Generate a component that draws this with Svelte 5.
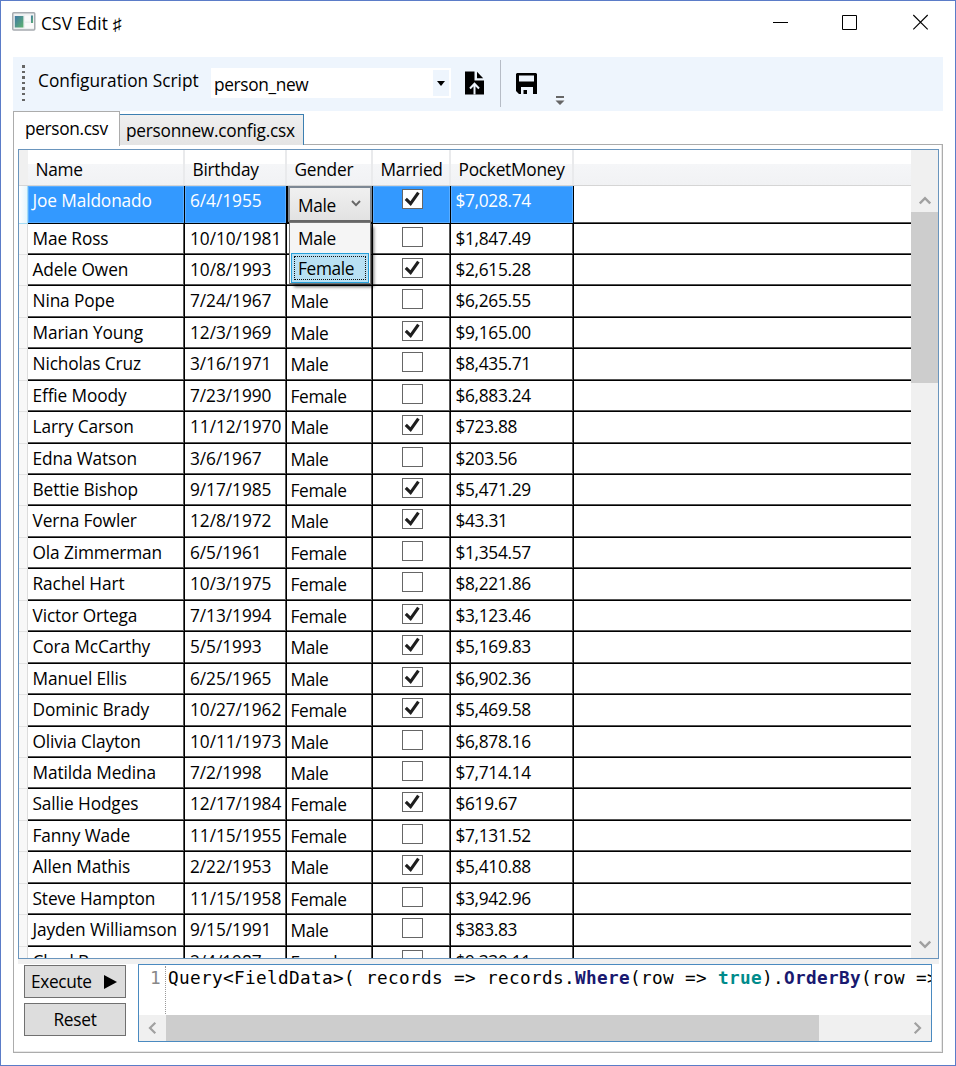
<script>
  const raw = `Joe Maldonado|6/4/1955|Male|1|$7,028.74
Mae Ross|10/10/1981|Male|0|$1,847.49
Adele Owen|10/8/1993|Female|1|$2,615.28
Nina Pope|7/24/1967|Male|0|$6,265.55
Marian Young|12/3/1969|Male|1|$9,165.00
Nicholas Cruz|3/16/1971|Male|0|$8,435.71
Effie Moody|7/23/1990|Female|0|$6,883.24
Larry Carson|11/12/1970|Male|1|$723.88
Edna Watson|3/6/1967|Male|0|$203.56
Bettie Bishop|9/17/1985|Female|1|$5,471.29
Verna Fowler|12/8/1972|Male|1|$43.31
Ola Zimmerman|6/5/1961|Female|0|$1,354.57
Rachel Hart|10/3/1975|Female|0|$8,221.86
Victor Ortega|7/13/1994|Female|1|$3,123.46
Cora McCarthy|5/5/1993|Male|1|$5,169.83
Manuel Ellis|6/25/1965|Male|1|$6,902.36
Dominic Brady|10/27/1962|Female|1|$5,469.58
Olivia Clayton|10/11/1973|Male|0|$6,878.16
Matilda Medina|7/2/1998|Male|0|$7,714.14
Sallie Hodges|12/17/1984|Female|1|$619.67
Fanny Wade|11/15/1955|Female|0|$7,131.52
Allen Mathis|2/22/1953|Male|1|$5,410.88
Steve Hampton|11/15/1958|Female|0|$3,942.96
Jayden Williamson|9/15/1991|Male|0|$383.83
Chad Brewer|2/4/1987|Female|0|$9,330.11`;
  const rows = raw.split('\n').map((line) => {
    const [name, birthday, gender, married, money] = line.split('|');
    return { name, birthday, gender, married: married === '1', money };
  });
  const headers = ['Name', 'Birthday', 'Gender', 'Married', 'PocketMoney'];
</script>

{#snippet check(on)}
  <span class="box">
    {#if on}
      <svg width="17" height="16" viewBox="0 0 17 16"><path d="M1.8 7.8 L6.6 12.6 L14.4 1.6" fill="none" stroke="#1e1e1e" stroke-width="3.1" /></svg>
    {/if}
  </span>
{/snippet}

<div class="window">
  <header class="titlebar">
    <svg class="appicon" width="24" height="20" viewBox="0 0 24 20">
      <defs>
        <linearGradient id="pane" x1="0" y1="0" x2="1" y2="1"><stop offset="0" stop-color="#3f78a6" /><stop offset="1" stop-color="#5fb36f" /></linearGradient>
      </defs>
      <rect x="0.75" y="1.75" width="22" height="17.3" rx="1" fill="#eef0f1" stroke="#a6abb0" stroke-width="1.5" />
      <rect x="2.8" y="5" width="8.6" height="11.5" fill="url(#pane)" />
      <rect x="13" y="4.5" width="5" height="6" fill="#fafafa" />
      <rect x="13" y="12" width="9" height="5" fill="#fafafa" />
      <rect x="19" y="4.5" width="2" height="7.5" fill="url(#pane)" />
    </svg>
    <span class="title">CSV Edit ♯</span>
    <div class="controls">
      <svg width="156" height="16" viewBox="0 0 156 16" fill="none" stroke="#000">
        <path d="M0 8.5H15M69.5 1.5h14v14h-14z" />
        <path d="M140.3 1L154.7 15.4M154.7 1L140.3 15.4" stroke-width="1.1" />
      </svg>
    </div>
  </header>

  <div class="toolbar">
    <span class="grip"></span>
    <span class="label">Configuration Script</span>
    <div class="combo"><span>person_new</span><i><svg width="8" height="5"><path d="M0 0h8L4 5z" /></svg></i></div>
    <svg class="file" width="20" height="24" viewBox="0 0 20 24">
      <path d="M0 .5H9.5V9.5H19V23.5H0z" /><path d="M12 .8L18.2 7.3H12z" />
      <path d="M9.5 23.5V13.2M5 17.5l4.5-4.8L14 17.5" fill="none" stroke="#eef5fd" stroke-width="2" />
    </svg>
    <span class="sep"></span>
    <svg class="save" width="21" height="21" viewBox="0 0 21 21">
      <path fill-rule="evenodd" d="M1 0H20L21 1V21H3L0 18V1zM3 2.5V8.5H18V2.5zM5 14V21H7.5V17H11V21H17V14z" />
    </svg>
    <svg class="more" width="10" height="10" viewBox="0 0 10 10" fill="#666"><path d="M1 0h8v2H1zM.5 4.5h9L5 9z" /></svg>
  </div>

  <div class="tabs">
    <div class="tab active"><span>person.csv</span></div>
    <div class="tab"><span>personnew.config.csx</span></div>
  </div>

  <main class="panel">
    <div class="grid">
      <div class="table">
        <div class="row head">
          <span class="rh"></span>
          {#each headers as h}<span class="th"><b>{h}</b></span>{/each}
          <span class="th"></span>
        </div>
        {#each rows as r, i}
          <div class="row" class:selected={i === 0}>
            <span class="rh"></span>
            <span class="td name">{r.name}</span>
            <span class="td date">{r.birthday}</span>
            <span class="td gender">
              {#if i === 0}
                <div class="picker">
                  <span>Male</span>
                  <svg width="10" height="7" viewBox="0 0 10 7"><path d="M1 1l4 4.2L9 1" fill="none" stroke="#666" stroke-width="1.9" /></svg>
                </div>
                <div class="menu"><div>Male</div><div class="hot"><span>Female</span></div></div>
              {:else}{r.gender}{/if}
            </span>
            <span class="td married">{@render check(r.married)}</span>
            <span class="td money">{r.money}</span>
            <span class="td rest"></span>
          </div>
        {/each}
      </div>
      <div class="vscroll">
        <svg width="12" height="9" viewBox="0 0 12 9"><path d="M.8 7.5L6 2.2l5.2 5.3" fill="none" stroke="#a0a0a0" stroke-width="2.4" /></svg>
        <span class="thumb"></span>
        <svg width="12" height="9" viewBox="0 0 12 9"><path d="M.8 1.5L6 6.8l5.2-5.3" fill="none" stroke="#a0a0a0" stroke-width="2.4" /></svg>
      </div>
    </div>
    <div class="splitter"></div>
    <div class="bottom">
      <div class="buttons">
        <button class="exec"><span>Execute</span><svg width="13" height="14"><path d="M0 0L13 7L0 14z" /></svg></button>
        <button><span>Reset</span></button>
      </div>
      <div class="editor">
        <div class="code">
          <span class="num">1</span><span class="dots"></span>
          <pre>Query&lt;FieldData&gt;( records =&gt; records.<b>Where</b>(row =&gt; <b class="kw">true</b>).<b>OrderBy</b>(row =&gt;</pre>
        </div>
        <div class="hscroll">
          <svg width="9" height="12" viewBox="0 0 9 12"><path d="M7.3 .8L2 6l5.3 5.2" fill="none" stroke="#a0a0a0" stroke-width="2.2" /></svg>
          <span class="hthumb"></span>
          <svg width="9" height="12" viewBox="0 0 9 12"><path d="M1.7 .8L7 6l-5.3 5.2" fill="none" stroke="#a0a0a0" stroke-width="2.2" /></svg>
        </div>
      </div>
    </div>
  </main>
</div>

<style>
  :global(body) { background: #fff; }
  * { box-sizing: border-box; }
  .window {
    width: 956px; height: 1066px; border: 1px solid #5b7cc8; background: #fff; overflow: hidden;
    display: flex; flex-direction: column; padding: 0 12px;
    font: 17.3px/24px "Open Sans", "Noto Sans", sans-serif; letter-spacing: -0.25px; color: #000;
  }
  .titlebar { height: 56px; display: flex; align-items: flex-start; flex: none; }
  .appicon { margin: 10px 0 0 -1px; }
  .title { margin: 11px 0 0 5px; letter-spacing: 0.15px; white-space: nowrap; }
  .controls { margin: 13px 14px 0 auto; height: 16px; line-height: 0; }
  .toolbar { height: 54px; background: #eef5fd; flex: none; display: flex; align-items: flex-start; }
  .grip { width: 3px; height: 36px; margin: 8px 0 0 9px; background: repeating-linear-gradient(#666 0 2.5px, transparent 2.5px 5.6px); }
  .label { margin: 12px 0 0 13px; width: 173px; white-space: nowrap; letter-spacing: 0; }
  .combo { width: 240px; height: 30px; background: #fff; margin-top: 11px; display: flex; justify-content: space-between; padding: 2px 2px 2px 3px; }
  .combo span { margin-top: 3px; letter-spacing: -0.35px; }
  .combo i { width: 16px; background: #eef5fd; display: flex; align-items: center; justify-content: center; }
  .file { margin: 14px 0 0 14px; }
  .sep { width: 1px; height: 47px; background: #b6bcc6; margin: 3px 15px 0 15px; }
  .save { margin-top: 16px; }
  .more { margin: 39px 0 0 18px; }
  .tabs { height: 34px; flex: none; display: flex; align-items: flex-end; position: relative; z-index: 1; white-space: nowrap; }
  .tab { height: 31px; width: 185px; border: 1px solid #3c7fb1; border-bottom: 0; background: linear-gradient(#f0f0f0, #e4e4e4); padding: 4px 0 0 6px; margin-left: -1px; }
  .tab.active { margin-left: 0; width: 107px; height: 35px; margin-bottom: -1px; background: #fff; border-color: #acacac; padding: 5px 0 0 11px; z-index: 2; letter-spacing: -0.35px; }
  .panel { border: 1px solid #acacac; width: 930px; height: 909px; flex: none; padding: 4px 3px 0 4px; margin-top: -1px; box-shadow: inset -1px -1px #e8e8e8; }
  .grid { height: 810px; width: 921px; border: 1px solid #6a95bd; display: flex; overflow: hidden; }
  .table { width: 892px; overflow: hidden; }
  .row { display: grid; grid-template-columns: 9px 157px 102px 86px 78px 123px 337px; height: 31.45px; }
  .row.head { height: 36px; background: linear-gradient(#fff 0 40%, #f5f6f8 41%, #f1f2f4); border-bottom: 1px solid #d5d5d5; }
  .rh { background: #f8f8f8; border-bottom: 1px solid #e4e4e4; border-right: 1px solid #dcdcdc; }
  .head .rh { background: #f0f0f0; border: 0; }
  .selected .rh { background: linear-gradient(90deg, #fff, #e6f6fd); border-color: #a5dcf5; }
  .th { border-right: 2px solid #e9eaec; padding: 8px 0 0 7.5px; white-space: nowrap; }
  .th:last-child { border: 0; }
  .th b { font-weight: 400; }
  .td { border-right: 1px solid #000; border-bottom: 1px solid #000; box-shadow: inset -1px -1px #555; padding: 3px 0 0 4.5px; white-space: nowrap; overflow: hidden; }
  .td.name { letter-spacing: -0.12px; }
  .td.date { padding-left: 5px; letter-spacing: -0.05px; }
  .td.gender { padding: 4px 0 0 3.5px; letter-spacing: -0.35px; }
  .td.money { letter-spacing: -0.32px; }
  .td.rest { border-right: 0; box-shadow: inset 0 -1px #555; }
  .td.married { padding: 3px 0 0 1px; text-align: center; line-height: 0; }
  .selected { height: 37.5px; }
  .selected .td:not(.rest) { background: #3399ff; color: #fff; box-shadow: inset 0 0 0 1px #5aadff; }
  .selected .td.gender { position: relative; overflow: visible; padding: 0 0 0 1px; background: #000; box-shadow: none; }
  .box { display: inline-block; width: 21px; height: 20px; border: 1.4px solid #666; background: #fff; padding: 1px; text-align: left; }
  .picker { height: 36px; background: linear-gradient(#f0f0f0, #e2e2e2); border: 2px solid #7d8894; border-bottom-color: #666; color: #000; display: flex; justify-content: space-between; padding: 6px 9px 0 8px; }
  .picker svg { margin-top: 6px; }
  .menu { position: absolute; left: 2px; top: 36px; width: 82px; height: 62px; border: 1px solid #777; background: #f5f5f5; color: #000; z-index: 5; box-shadow: 4px 4px 3px -1px #0008; }
  .menu > div { height: 30px; padding: 4px 0 0 8px; }
  .menu > .hot { background: #b8e0f3; border: 1px solid #26a0da; margin: 0 1px; height: 30px; padding: 2px; }
  .hot span { display: block; height: 24px; padding: 0 0 0 3px; border: 1px dotted #111; line-height: 24px; }
  .vscroll { width: 27px; background: #f0f0f0; display: flex; flex-direction: column; align-items: center; padding-top: 46px; }
  .thumb { width: 27px; height: 171px; background: #cdcdcd; margin-top: 7px; }
  .vscroll svg:last-child { margin: auto 0 9px; }
  .splitter { height: 5px; background: #f0f0f0; }
  .bottom { display: flex; padding-left: 6px; }
  .buttons { width: 114px; display: flex; flex-direction: column; gap: 5px; padding-top: 1px; }
  button { width: 102px; height: 33px; padding: 0; border: 1px solid #707070; background: #ddd; font: inherit; letter-spacing: inherit; color: #000; display: flex; align-items: center; justify-content: center; }
  .exec { justify-content: flex-start; padding-left: 6px; gap: 12px; }
  .exec span { letter-spacing: -0.35px; }
  .editor { width: 794px; height: 78px; border: 1px solid #4a8ac0; background: #fff; margin-top: 0; }
  .code { height: 50px; display: flex; overflow: hidden; padding-top: 1px; font: 17.7px/24px "DejaVu Sans Mono", monospace; letter-spacing: 0.35px; }
  .num { width: 26px; flex: none; padding-left: 11px; color: #888; }
  .dots { height: 48px; border-left: 1px dotted #999; margin-right: 2px; }
  pre { margin: 0; font: inherit; white-space: pre; overflow: hidden; }
  pre b { color: #191970; }
  pre .kw { color: #008b8b; }
  .hscroll { height: 26px; background: #f0f0f0; display: flex; align-items: center; padding: 0 9px; }
  .hthumb { width: 653px; height: 26px; background: #cdcdcd; margin: 0 auto 0 9px; }
</style>
